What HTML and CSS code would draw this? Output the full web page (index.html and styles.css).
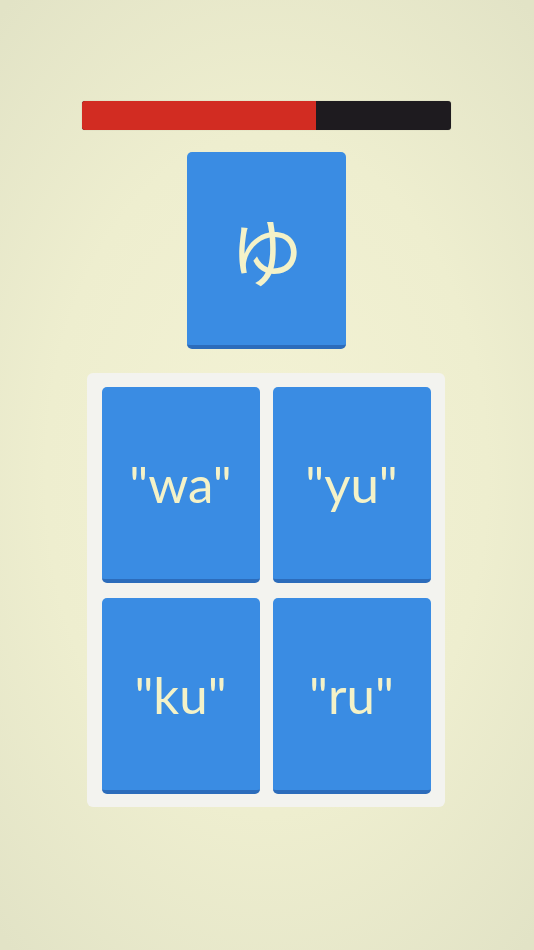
FILE: index.html
```html
<!DOCTYPE html>
<html>
<head>
<meta charset="utf-8">
<link rel="stylesheet" href="styles.css">
</head>
<body>
<main class="screen">
  <div class="progress"><div class="progress-fill" style="width:63.4%"></div></div>
  <div class="prompt-card"><span class="kana">ゆ</span></div>
  <div class="choices">
    <div class="choice">"wa"</div>
    <div class="choice">"yu"</div>
    <div class="choice">"ku"</div>
    <div class="choice">"ru"</div>
  </div>
</main>
</body>
</html>
```

FILE: styles.css
```css
html, body {
  margin: 0;
  padding: 0;
  height: 100%;
}
body {
  background: radial-gradient(ellipse 75% 65% at 50% 50%, #f3f2d4 0%, #eeeecf 55%, #e2e3c6 100%);
  font-family: "Lato", "Open Sans", sans-serif;
}
.screen {
  width: 533px;
  height: 950px;
  display: flex;
  flex-direction: column;
  align-items: center;
  padding-top: 101px;
  box-sizing: border-box;
}
.progress {
  width: 369px;
  height: 29px;
  background: #1e1b1f;
  border-radius: 3px;
  overflow: hidden;
  display: flex;
  box-shadow: 0 0 1px rgba(0,0,0,0.3);
}
.progress-fill {
  height: 100%;
  background: #d22c22;
}
.prompt-card {
  margin-top: 22px;
  width: 159px;
  height: 193px;
  border-bottom: 4px solid #2c6cbb;
  border-radius: 5px;
  background: #3a8ce3;
  display: flex;
  align-items: center;
  justify-content: center;
}
.kana {
  font-family: "Noto Sans CJK JP", sans-serif;
  font-size: 74px;
  color: #f4f2c8;
  line-height: 1;
}
.choices {
  margin-top: 24px;
  margin-left: -2px;
  width: 358px;
  box-sizing: border-box;
  padding: 14px 14px 13px 15px;
  background: #f3f3ef;
  border-radius: 6px;
  display: grid;
  grid-template-columns: 158px 158px;
  column-gap: 13px;
  row-gap: 15px;
}
.choice {
  height: 192px;
  border-bottom: 4px solid #2c6cbb;
  border-radius: 5px;
  background: #3a8ce3;
  color: #f4f2c8;
  font-size: 51px;
  display: flex;
  align-items: center;
  justify-content: center;
}
```
